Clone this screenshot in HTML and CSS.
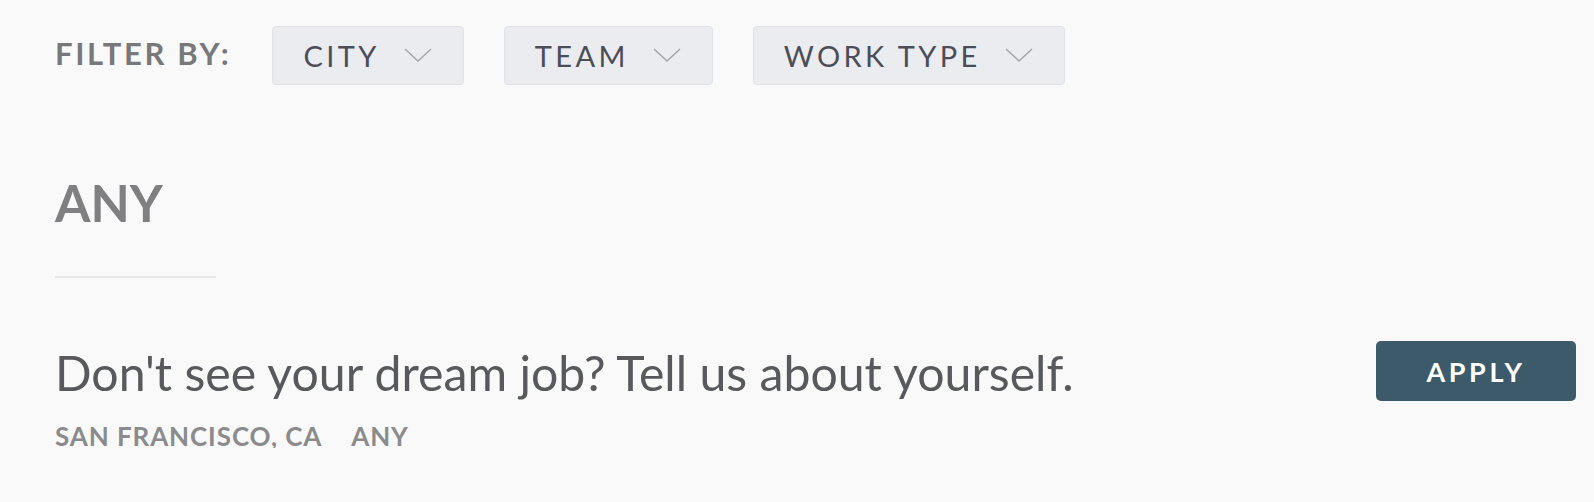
FILE: index.html
```html
<!DOCTYPE html>
<html lang="en">
<head>
<meta charset="utf-8">
<title>Jobs</title>
<link rel="stylesheet" href="styles.css">
</head>
<body>
<div class="page">
  <div class="filters">
    <span class="filter-label">FILTER BY:</span>
    <button class="filter-btn"><span>CITY</span><svg class="chev" width="28" height="14" viewBox="0 0 28 14"><polyline points="1,1 14,13 27,1" fill="none" stroke="#a3a4a8" stroke-width="1.4"/></svg></button>
    <button class="filter-btn"><span>TEAM</span><svg class="chev" width="28" height="14" viewBox="0 0 28 14"><polyline points="1,1 14,13 27,1" fill="none" stroke="#a3a4a8" stroke-width="1.4"/></svg></button>
    <button class="filter-btn"><span>WORK TYPE</span><svg class="chev" width="28" height="14" viewBox="0 0 28 14"><polyline points="1,1 14,13 27,1" fill="none" stroke="#a3a4a8" stroke-width="1.4"/></svg></button>
  </div>
  <h2 class="group-title">ANY</h2>
  <div class="divider"></div>
  <div class="job">
    <div class="job-info">
      <div class="job-title">Don't see your dream job? Tell us about yourself.</div>
      <div class="job-meta"><span>SAN FRANCISCO, CA</span><span>ANY</span></div>
    </div>
    <a class="apply" href="#">APPLY</a>
  </div>
</div>
</body>
</html>
```

FILE: styles.css
```css
* { box-sizing: border-box; }
html, body {
  margin: 0;
  padding: 0;
  background: #f9f9f9;
  font-family: Lato, "Liberation Sans", sans-serif;
}
.page {
  padding: 26px 18px 0 55px;
}
.filters {
  display: flex;
  align-items: center;
  height: 58px;
}
.filter-label {
  font-size: 31px;
  font-weight: 700;
  color: #78787b;
  letter-spacing: 2.6px;
  margin-right: 41px;
  position: relative;
  top: -2px;
}
.filter-btn {
  display: flex;
  align-items: center;
  gap: 24px;
  height: 59px;
  margin-right: 40px;
  padding: 0 31px 0 30px;
  background: #ebecef;
  border: 1px solid #e1e2e6;
  border-radius: 4px;
  font-family: inherit;
  font-size: 29px;
  font-weight: 400;
  color: #4b4d57;
  letter-spacing: 3.4px;
}
.chev { display: block; }
.group-title {
  margin: 93px 0 0;
  font-size: 51px;
  line-height: 51px;
  font-weight: 700;
  color: #7f7f81;
}
.divider {
  margin-top: 48px;
  width: 161px;
  height: 2px;
  background: #e6e6e8;
}
.job {
  display: flex;
  justify-content: space-between;
  align-items: flex-start;
  margin-top: 63px;
}
.job-title {
  font-size: 48.2px;
  line-height: 63px;
  color: #58595d;
}
.job-meta {
  display: flex;
  gap: 29px;
  margin-top: 20px;
  font-size: 26px;
  line-height: 24px;
  font-weight: 700;
  color: #8b8b8e;
  letter-spacing: 0.9px;
}
.apply {
  display: flex;
  align-items: center;
  justify-content: center;
  width: 200px;
  height: 60px;
  background: #3c5a6a;
  border-radius: 5px;
  color: #ffffff;
  font-size: 27px;
  font-weight: 700;
  letter-spacing: 3.6px;
  text-decoration: none;
}
```
